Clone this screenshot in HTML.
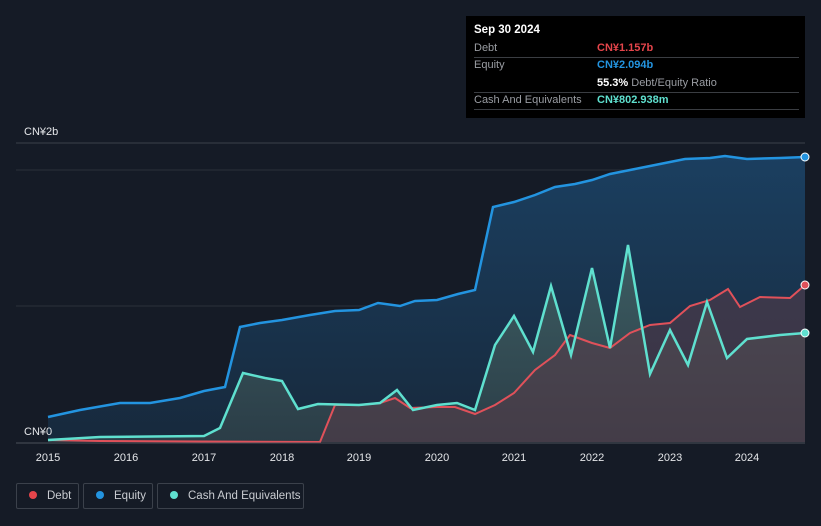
<!DOCTYPE html><html><head><style>
body{margin:0;width:821px;height:526px;background:#151b26;font-family:"Liberation Sans","Noto Sans CJK SC",sans-serif;overflow:hidden;position:relative}
.tt{position:absolute;left:466px;top:16px;width:339px;height:102px;background:#000;color:#fff;font-size:11px}
.row{position:absolute;left:8px;right:6px;height:17px;line-height:17px;border-bottom:1px solid #3a3d42;color:#9a9da3}
.row span{position:absolute;left:123px;font-weight:bold}
.leg{position:absolute;top:483px;height:26px;border:1px solid #3b414b;border-radius:2px;color:#c9ccd1;font-size:11.5px;line-height:24px;box-sizing:border-box;white-space:nowrap;overflow:hidden}
.dot{display:inline-block;width:8px;height:8px;border-radius:50%;margin:0 10px 0 12px;vertical-align:0px}
</style></head><body>
<svg width="821" height="526" style="position:absolute;left:0;top:0">
<defs>
<linearGradient id="eq" x1="0" y1="0" x2="0" y2="1"><stop offset="0" stop-color="#1b3f60"/><stop offset="1" stop-color="#17293c"/></linearGradient>
<linearGradient id="ca" x1="0" y1="0" x2="0" y2="1"><stop offset="0" stop-color="#3d5e63"/><stop offset="1" stop-color="#2b3d47"/></linearGradient>
</defs>
<line x1="16" y1="143" x2="805" y2="143" stroke="#3a404a"/>
<line x1="16" y1="170" x2="805" y2="170" stroke="#2a3039"/>
<line x1="16" y1="306" x2="805" y2="306" stroke="#2a3039"/>
<polygon fill="url(#eq)" points="48,442 48,417 80,410 120,403 150,403 180,398 204,391 225,387 240,327 260,323 282,320 310,315 335,311 359,310 378,303 400,306 415,301 437,300 458,294 475,290 493,207 514,202 535,195 555,187 575,184 592,180 610,174 640,168 670,162 685,159 710,158 725,156 747,159 780,158 805,157 805,442"/>
<polygon fill="url(#ca)" points="48,442 48,440 100,437 204,436 220,428 243,373 265,378 282,381 298,409 318,404 359,405 380,403 397,390 413,410 437,405 457,403 475,410 495,345 514,316 533,352 551,286 571,355 592,268 610,348 628,245 650,374 670,330 688,365 707,302 727,358 747,339 780,335 805,333 805,442"/>
<polygon fill="#5a3d48" opacity="0.55" points="320,442 335,405 359,405 380,403 395,398 410,408 437,407 455,407 475,414 495,405 514,393 535,370 555,355 570,335 592,343 610,348 630,333 650,325 670,323 690,306 710,300 728,289 740,307 760,297 790,298 805,285 805,442"/>
<polyline fill="none" stroke="#e0515a" stroke-width="2" points="48,440 100,441 320,442 335,405 359,405 380,403 395,398 410,408 437,407 455,407 475,414 495,405 514,393 535,370 555,355 570,335 592,343 610,348 630,333 650,325 670,323 690,306 710,300 728,289 740,307 760,297 790,298 805,285"/>
<polyline fill="none" stroke="#2394e0" stroke-width="2.5" points="48,417 80,410 120,403 150,403 180,398 204,391 225,387 240,327 260,323 282,320 310,315 335,311 359,310 378,303 400,306 415,301 437,300 458,294 475,290 493,207 514,202 535,195 555,187 575,184 592,180 610,174 640,168 670,162 685,159 710,158 725,156 747,159 780,158 805,157"/>
<polyline fill="none" stroke="#5fe0cf" stroke-width="2.5" points="48,440 100,437 204,436 220,428 243,373 265,378 282,381 298,409 318,404 359,405 380,403 397,390 413,410 437,405 457,403 475,410 495,345 514,316 533,352 551,286 571,355 592,268 610,348 628,245 650,374 670,330 688,365 707,302 727,358 747,339 780,335 805,333"/>
<line x1="16" y1="443" x2="805" y2="443" stroke="#4a505a"/>
<circle cx="805" cy="157" r="4" fill="#2394e0" stroke="#fff" stroke-width="1"/>
<circle cx="805" cy="285" r="4" fill="#e0515a" stroke="#fff" stroke-width="1"/>
<circle cx="805" cy="333" r="4" fill="#5fe0cf" stroke="#fff" stroke-width="1"/>
<g fill="#e4e6e9" font-size="11" text-anchor="middle">
<text x="48" y="461">2015</text><text x="126" y="461">2016</text><text x="204" y="461">2017</text><text x="282" y="461">2018</text><text x="359" y="461">2019</text><text x="437" y="461">2020</text><text x="514" y="461">2021</text><text x="592" y="461">2022</text><text x="670" y="461">2023</text><text x="747" y="461">2024</text>
</g>
<text x="24" y="135" fill="#e4e6e9" font-size="11">CN¥2b</text>
<text x="24" y="435" fill="#e4e6e9" font-size="11">CN¥0</text>
</svg>
<div class="tt">
<div style="position:absolute;left:8px;top:8px;font-size:11.5px;font-weight:bold">Sep 30 2024</div>
<div class="row" style="top:24px">Debt<span style="color:#e5454b">CN¥1.157b</span></div>
<div class="row" style="top:41px;border:none">Equity<span style="color:#2394e0">CN¥2.094b</span></div>
<div class="row" style="top:59px"><span style="color:#fff">55.3% <b style="color:#9a9da3;font-weight:normal">Debt/Equity Ratio</b></span></div>
<div class="row" style="top:76px">Cash And Equivalents<span style="color:#5fe0cf">CN¥802.938m</span></div>
</div>
<div class="leg" style="left:16px;width:63px"><span class="dot" style="background:#e5454b"></span>Debt</div>
<div class="leg" style="left:83px;width:70px"><span class="dot" style="background:#2394e0"></span>Equity</div>
<div class="leg" style="left:157px;width:147px"><span class="dot" style="background:#5fe0cf"></span>Cash And Equivalents</div>
</body></html>
